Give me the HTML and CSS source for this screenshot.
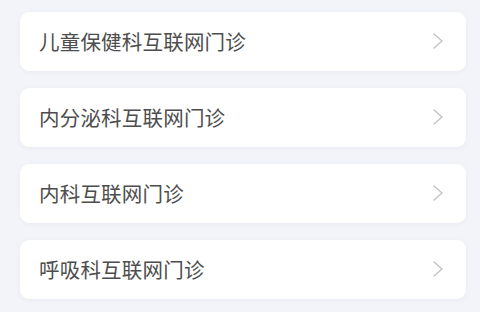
FILE: index.html
```html
<!DOCTYPE html>
<html lang="zh-CN">
<head>
    <meta charset="UTF-8">
    <meta name="viewport" content="width=device-width, initial-scale=1.0">
    <title>互联网门诊</title>
    <link rel="stylesheet" href="styles.css">
</head>
<body>
    <div class="clinic-list">
        <div class="clinic-item">
            <span class="clinic-name">儿童保健科互联网门诊</span>
            <svg class="arrow" viewBox="0 0 12 18" width="12" height="18"><path d="M2 2 L10 9 L2 16" /></svg>
        </div>
        <div class="clinic-item">
            <span class="clinic-name">内分泌科互联网门诊</span>
            <svg class="arrow" viewBox="0 0 12 18" width="12" height="18"><path d="M2 2 L10 9 L2 16" /></svg>
        </div>
        <div class="clinic-item">
            <span class="clinic-name">内科互联网门诊</span>
            <svg class="arrow" viewBox="0 0 12 18" width="12" height="18"><path d="M2 2 L10 9 L2 16" /></svg>
        </div>
        <div class="clinic-item">
            <span class="clinic-name">呼吸科互联网门诊</span>
            <svg class="arrow" viewBox="0 0 12 18" width="12" height="18"><path d="M2 2 L10 9 L2 16" /></svg>
        </div>
    </div>
</body>
</html>
```

FILE: styles.css
```css
body {
    margin: 0;
    background-color: #f3f4f9;
    font-family: "Noto Sans CJK SC", "Noto Sans", sans-serif;
}
.clinic-list {
    display: flex;
    flex-direction: column;
    gap: 17px;
    padding: 12px 14px 12px 20px;
}
.clinic-item {
    display: flex;
    align-items: center;
    justify-content: space-between;
    height: 59px;
    padding: 0 22px 2px 19px;
    box-sizing: border-box;
    background-color: #fff;
    border-radius: 9px;
    box-shadow: 0 1px 4px rgba(120, 125, 150, 0.08);
}
.clinic-name {
    font-size: 20.5px;
    color: #4d4d4d;
    letter-spacing: 0.2px;
}
.arrow {
    fill: none;
    stroke: #c2c2c2;
    stroke-width: 1.3;
    stroke-linecap: round;
    stroke-linejoin: round;
}
```
